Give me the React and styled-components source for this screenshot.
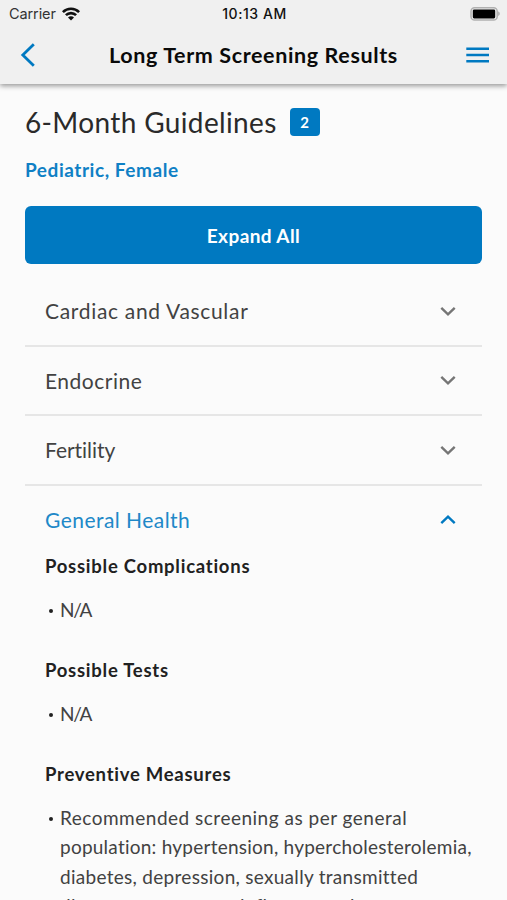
import React, { useState } from "react";
import styled, { createGlobalStyle } from "styled-components";

const GlobalStyle = createGlobalStyle`
  * {
    box-sizing: border-box;
  }

  body {
    margin: 0;
    background: #fbfbfb;
    color: #2a2a2a;
    font-family: Lato, "Liberation Sans", sans-serif;
    font-variant-ligatures: none;
  }

  button {
    font-family: inherit;
    border: none;
    padding: 0;
    background: none;
    cursor: pointer;
  }

  h1, h2, h3, p, ul {
    margin: 0;
    padding: 0;
    font-weight: 400;
  }
`;

const Screen = styled.div`
  display: flex;
  flex-direction: column;
  width: 100%;
  height: 900px;
  overflow: hidden;
`;

const Header = styled.header`
  flex: none;
  height: 84px;
  background: #f0f0f0;
  box-shadow: 0 2px 5px rgba(0, 0, 0, 0.4);
`;

const StatusBar = styled.div`
  display: grid;
  grid-template-columns: 1fr auto 1fr;
  align-items: center;
  height: 27px;
  padding: 0 7px 0 9px;
  color: #111;
  font-family: Inter, "Liberation Sans", sans-serif;
  font-size: 14.5px;
`;

const Carrier = styled.div`
  display: flex;
  align-items: center;
  gap: 6px;
  color: #333;
  letter-spacing: -0.1px;
`;

const Clock = styled.div`
  font-weight: 500;
  font-size: 14px;
  letter-spacing: 0.55px;
`;

const Battery = styled.svg`
  justify-self: end;
`;

const NavBar = styled.div`
  display: grid;
  grid-template-columns: 40px 1fr 40px;
  align-items: center;
  height: 56px;
  padding: 0 17px;
`;

const NavButton = styled.button`
  display: flex;
  justify-content: ${(props) => (props.$right ? "flex-end" : "flex-start")};
  color: #0079c1;
`;

const NavTitle = styled.h1`
  font-size: 21.5px;
  font-weight: 700;
  letter-spacing: 0.62px;
  color: #0a0a0a;
  text-align: center;
  white-space: nowrap;
`;

const Content = styled.main`
  padding: 18px 25px 0;
`;

const HeadingRow = styled.div`
  display: flex;
  align-items: center;
  gap: 13px;
  height: 40px;
`;

const Heading = styled.h2`
  padding-bottom: 1px;
  font-size: 28px;
  line-height: 40px;
  letter-spacing: 0.36px;
`;

const Count = styled.span`
  display: flex;
  align-items: center;
  justify-content: center;
  width: 30px;
  height: 28px;
  border-radius: 4px;
  background: #0079c1;
  color: #fff;
  font-size: 15px;
  font-weight: 700;
`;

const Audience = styled.p`
  margin-top: 15px;
  color: #0f80c5;
  font-size: 19px;
  font-weight: 700;
  line-height: 26px;
  letter-spacing: 0.55px;
`;

const ExpandButton = styled.button`
  width: 100%;
  height: 58px;
  margin-top: 23px;
  border-radius: 6px;
  background: #0079c1;
  color: #fff;
  font-size: 19px;
  font-weight: 700;
  letter-spacing: 0.4px;
`;

const Accordion = styled.div`
  margin-top: 13px;
`;

const Section = styled.section`
  border-bottom: 2px solid #e6e6e6;
`;

const SectionHeader = styled.button`
  display: flex;
  align-items: center;
  justify-content: space-between;
  width: 100%;
  height: 67.6px;
  padding: 0 26px 0 20px;
  color: ${(props) => (props.$open ? "#2088c8" : "#424242")};
  font-size: 21px;
  letter-spacing: ${(props) => props.$tracking}px;
`;

const Chevron = styled.svg`
  color: ${(props) => (props.$open ? "#0079c1" : "#757575")};
  transform: ${(props) => (props.$open ? "rotate(180deg)" : "none")};
`;

const SectionBody = styled.div`
  padding: 0 0 20px 20px;
`;

const Topic = styled.h3`
  color: #212121;
  font-size: 18.5px;
  font-weight: 700;
  line-height: 26px;
  letter-spacing: 0.74px;
`;

const Items = styled.ul`
  margin: 15.7px 0 33px;
  list-style: none;
`;

const Item = styled.li`
  display: flex;
  color: #424242;
  font-size: 19px;
  line-height: 29.3px;

  &::before {
    content: "";
    flex: none;
    width: 4px;
    height: 4px;
    margin: 14px 7px 0 4px;
    border-radius: 50%;
    background: #212121;
  }
`;

const Line = styled.p`
  letter-spacing: ${(props) => props.$tracking}px;
  white-space: nowrap;
`;

const sections = [
  { name: "Cardiac and Vascular", tracking: 0.68, topics: [] },
  { name: "Endocrine", tracking: 0.5, topics: [] },
  { name: "Fertility", tracking: -0.05, topics: [] },
  {
    name: "General Health",
    tracking: 0.46,
    topics: [
      {
        title: "Possible Complications",
        items: [[{ text: "N/A", tracking: -1.2 }]],
      },
      { title: "Possible Tests", items: [[{ text: "N/A", tracking: -1.2 }]] },
      {
        title: "Preventive Measures",
        items: [
          [
            { text: "Recommended screening as per general", tracking: 0.5 },
            {
              text: "population: hypertension, hypercholesterolemia,",
              tracking: 0.24,
            },
            {
              text: "diabetes, depression, sexually transmitted",
              tracking: 0.29,
            },
            { text: "diseases, pregnancy, influenza and", tracking: 0.3 },
          ],
        ],
      },
    ],
  },
];

function App() {
  const [open, setOpen] = useState(["General Health"]);

  const toggle = (name) => {
    setOpen(
      open.includes(name) ? open.filter((n) => n !== name) : [...open, name]
    );
  };

  return (
    <Screen>
      <GlobalStyle />
      <Header>
        <StatusBar>
          <Carrier>
            Carrier
            <svg width="18" height="14" viewBox="0 0 18 14">
              <g fill="none" stroke="#111" strokeWidth="2.6">
                <path d="M0.9 5.1a11.5 11.5 0 0 1 16.2 0" />
                <path d="M3.9 8.2a7.2 7.2 0 0 1 10.2 0" />
              </g>
              <path d="M9 13.6l-3-3a4.2 4.2 0 0 1 6 0z" fill="#111" />
            </svg>
          </Carrier>
          <Clock>10:13 AM</Clock>
          <Battery width="30" height="14" viewBox="0 0 30 14">
            <rect x="1" y="0.8" width="26.2" height="12.2" rx="3.6" fill="#f0f0f0" stroke="#b0b0b0" strokeWidth="1.5" />
            <rect x="2.8" y="2.4" width="22.4" height="9" rx="1.4" fill="#000" />
            <path d="M28.2 4.6c2 .6 2 3.8 0 4.4z" fill="#aaa" />
          </Battery>
        </StatusBar>
        <NavBar>
          <NavButton aria-label="Back">
            <svg width="20" height="24" viewBox="0 0 20 24" fill="none" stroke="currentColor" strokeWidth="2.8">
              <path d="M16.8 1.2L5.8 12l11 10.8" />
            </svg>
          </NavButton>
          <NavTitle>Long Term Screening Results</NavTitle>
          <NavButton $right aria-label="Menu">
            <svg width="24" height="18" viewBox="0 0 24 18" stroke="currentColor" strokeWidth="2.4">
              <path d="M0.3 2.8h22.7M0.3 9h22.7M0.3 15.2h22.7" />
            </svg>
          </NavButton>
        </NavBar>
      </Header>
      <Content>
        <HeadingRow>
          <Heading>6-Month Guidelines</Heading>
          <Count>2</Count>
        </HeadingRow>
        <Audience>Pediatric, Female</Audience>
        <ExpandButton onClick={() => setOpen(sections.map((s) => s.name))}>
          Expand All
        </ExpandButton>
        <Accordion>
          {sections.map(({ name, tracking, topics }) => {
            const isOpen = open.includes(name);
            return (
              <Section key={name}>
                <SectionHeader
                  $open={isOpen}
                  $tracking={tracking}
                  onClick={() => toggle(name)}
                >
                  {name}
                  <Chevron $open={isOpen} width="16" height="10" viewBox="0 0 16 10" fill="none" stroke="currentColor" strokeWidth="2.4">
                    <path d="M1.3 1.8L8 8.3l6.7-6.5" />
                  </Chevron>
                </SectionHeader>
                {isOpen && topics.length > 0 && (
                  <SectionBody>
                    {topics.map((topic) => (
                      <React.Fragment key={topic.title}>
                        <Topic>{topic.title}</Topic>
                        <Items>
                          {topic.items.map((lines, i) => (
                            <Item key={i}>
                              <div>
                                {lines.map((line) => (
                                  <Line key={line.text} $tracking={line.tracking}>
                                    {line.text}
                                  </Line>
                                ))}
                              </div>
                            </Item>
                          ))}
                        </Items>
                      </React.Fragment>
                    ))}
                  </SectionBody>
                )}
              </Section>
            );
          })}
        </Accordion>
      </Content>
    </Screen>
  );
}

export default App;
